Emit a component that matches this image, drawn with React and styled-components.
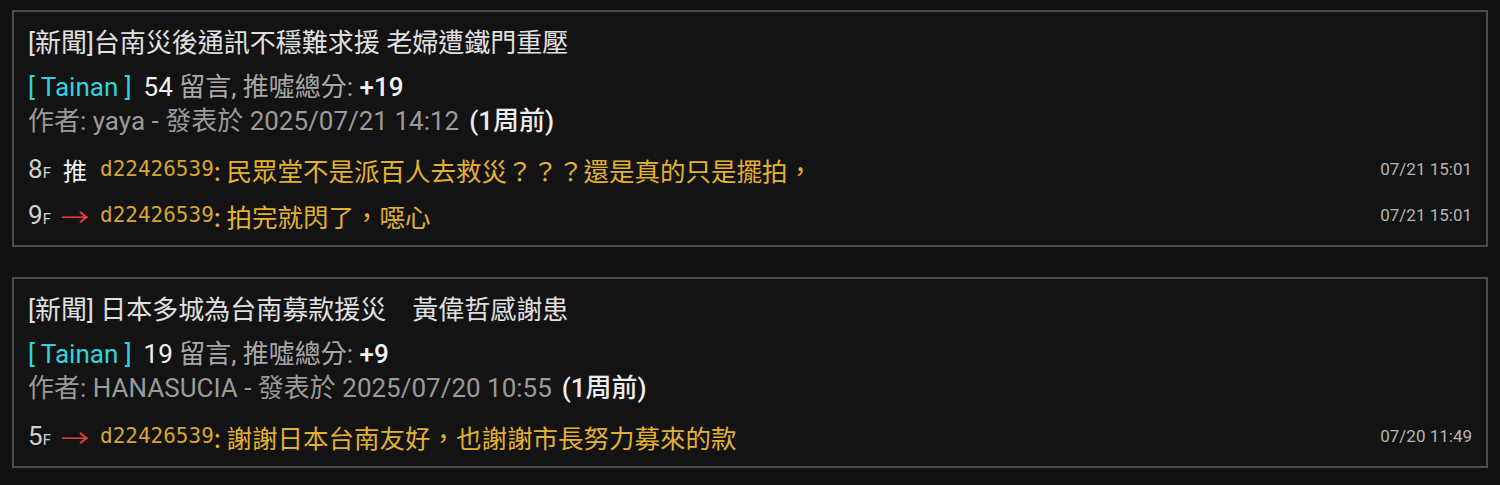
import React from 'react';
import styled, { createGlobalStyle } from 'styled-components';

const GlobalStyle = createGlobalStyle`
  html, body {
    margin: 0;
    padding: 0;
    background: #111111;
  }
  body {
    font-family: Roboto, "Noto Sans CJK TC", sans-serif;
    color: #d8d8d8;
  }
`;

const Page = styled.div`
  padding: 10px 12px;
  display: flex;
  flex-direction: column;
  gap: 30px;
`;

const Card = styled.div`
  border: 2px solid #4c4c4c;
  background: #131313;
  padding: 12px 14px 7px;
`;

const Title = styled.div`
  font-size: 26px;
  line-height: 38px;
  color: #e0e0e0;
  margin-bottom: 8px;
  white-space: pre;
`;

const Info = styled.div`
  font-size: 26px;
  line-height: 34px;
  color: #a8a8a8;
`;

const Board = styled.span`
  color: #2fd3de;
  margin-right: 12px;
`;

const Strong = styled.span`
  color: #f2f2f2;
  font-weight: ${(props) => (props.bold ? 500 : 400)};
`;

const Meta = styled.div`
  font-size: 26px;
  line-height: 34px;
  color: #9a9a9a;
  margin-bottom: 8px;
`;

const Ago = styled.span`
  color: #ececec;
  font-weight: 500;
  margin-left: 10px;
`;

const PushRow = styled.div`
  display: flex;
  align-items: center;
  height: 46px;
`;

const Floor = styled.span`
  width: 33px;
  font-size: 26px;
  color: #cfcfcf;
  small {
    font-size: 15px;
  }
`;

const Tag = styled.span`
  display: inline-block;
  width: 28px;
  text-align: center;
  font-family: "Noto Sans CJK TC", sans-serif;
  font-size: 24px;
  color: ${(props) => (props.kind === 'push' ? '#f4f4f4' : '#e23c3c')};
  transform: ${(props) => (props.kind === 'push' ? 'none' : 'scaleX(1.2)')};
  margin-right: 11px;
`;

const UserId = styled.span`
  font-family: "DejaVu Sans Mono", monospace;
  font-size: 21px;
  color: #d6a62c;
`;

const Content = styled.span`
  flex: 1;
  font-family: "Noto Sans CJK TC", sans-serif;
  font-size: 25.5px;
  color: #e2b12f;
  white-space: nowrap;
`;

const Time = styled.span`
  font-size: 17px;
  color: #b4b4b4;
`;

const posts = [
  {
    title: '[新聞]台南災後通訊不穩難求援 老婦遭鐵門重壓',
    count: 54,
    score: '+19',
    author: 'yaya',
    date: '2025/07/21 14:12',
    pushes: [
      { floor: 8, kind: 'push', user: 'd22426539', text: '民眾堂不是派百人去救災？？？還是真的只是擺拍，', time: '07/21 15:01' },
      { floor: 9, kind: 'arrow', user: 'd22426539', text: '拍完就閃了，噁心', time: '07/21 15:01' },
    ],
  },
  {
    title: '[新聞] 日本多城為台南募款援災\u3000黃偉哲感謝患',
    count: 19,
    score: '+9',
    author: 'HANASUCIA',
    date: '2025/07/20 10:55',
    pushes: [
      { floor: 5, kind: 'arrow', user: 'd22426539', text: '謝謝日本台南友好，也謝謝市長努力募來的款', time: '07/20 11:49' },
    ],
  },
];

const Post = ({ post }) => (
  <Card>
    <Title>{post.title}</Title>
    <Info>
      <Board>[ Tainan ]</Board>
      <Strong>{post.count}</Strong> 留言, 推噓總分: <Strong bold>{post.score}</Strong>
    </Info>
    <Meta>
      作者: {post.author} - 發表於 {post.date}
      <Ago>(1周前)</Ago>
    </Meta>
    {post.pushes.map((p) => (
      <PushRow key={p.floor}>
        <Floor>{p.floor}<small>F</small></Floor>
        <Tag kind={p.kind}>{p.kind === 'push' ? '推' : '→'}</Tag>
        <UserId>{p.user}</UserId>
        <Content>: {p.text}</Content>
        <Time>{p.time}</Time>
      </PushRow>
    ))}
  </Card>
);

export default function App() {
  return (
    <>
      <GlobalStyle />
      <Page lang="zh-TW">
        {posts.map((post) => (
          <Post key={post.date} post={post} />
        ))}
      </Page>
    </>
  );
}
